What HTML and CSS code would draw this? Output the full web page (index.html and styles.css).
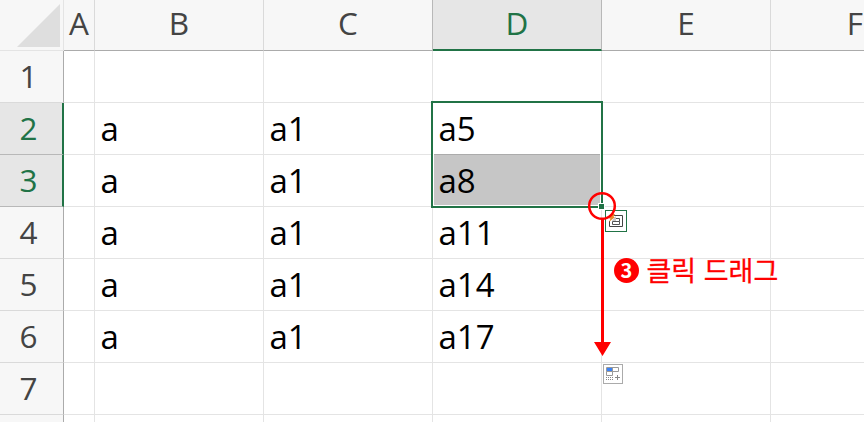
FILE: index.html
```html
<!DOCTYPE html>
<html lang="ko">
<head>
<meta charset="utf-8">
<title>Sheet</title>
<link rel="stylesheet" href="styles.css">
</head>
<body>
<main class="sheet">
  <div class="row head">
    <div class="corner"><svg width="43" height="43" viewBox="0 0 43 43"><path d="M43 0V43H0Z" fill="#dedede"/></svg></div>
    <div class="col">A</div><div class="col">B</div><div class="col before">C</div><div class="col active">D</div><div class="col">E</div><div class="col">F</div>
  </div>
  <div class="row"><div class="num">1</div><div></div><div></div><div></div><div></div><div></div><div></div></div>
  <div class="row"><div class="num active">2</div><div></div><div>a</div><div>a1</div><div class="above">a5</div><div></div><div></div></div>
  <div class="row"><div class="num active">3</div><div></div><div>a</div><div>a1</div><div class="picked">a8</div><div></div><div></div></div>
  <div class="row"><div class="num">4</div><div></div><div>a</div><div>a1</div><div>a11</div><div></div><div></div></div>
  <div class="row"><div class="num">5</div><div></div><div>a</div><div>a1</div><div>a14</div><div></div><div></div></div>
  <div class="row"><div class="num">6</div><div></div><div>a</div><div>a1</div><div>a17</div><div></div><div></div></div>
  <div class="row"><div class="num">7</div><div></div><div></div><div></div><div></div><div></div><div></div></div>
  <div class="row"><div class="num"></div><div></div><div></div><div></div><div></div><div></div><div></div></div>

  <div class="selection"></div>
  <div class="handle"></div>
  <svg class="smart" width="22" height="22" viewBox="0 0 22 22" fill="none">
    <rect x=".5" y=".5" width="21" height="21" fill="#fff" stroke="#217346"/>
    <path d="M9 5.500H17.500V16.500H4.500V11" stroke="#444"/>
    <path d="M10 8.500H14.500V11.500M7.500 11.500H14.500V14.500H7.500Z" stroke="#555"/>
    <path d="M9 8L11 6V11H7Z" fill="#c8c8c8"/>
    <path d="M7 4H10L8.500 7H10L4 12L5.500 8.500H4Z" fill="#e8892b"/>
  </svg>
  <svg class="fill" width="20" height="20" viewBox="0 0 20 20" fill="none">
    <rect x=".5" y=".5" width="19" height="19" fill="#fff" stroke="#ababab"/>
    <path d="M3.500 3.500H15.500V7.500H3.500ZM9.500 3.500V11.500H3.500V7.500" stroke="#999"/>
    <rect x="4" y="4" width="5" height="3" fill="#3b82f6"/>
    <path d="M3 13.500H10M3 15.500H10" stroke="#888" stroke-dasharray="1 1"/>
    <path d="M12 13.500H17M14.500 11V16" stroke="#888"/>
  </svg>
  <svg class="guide" width="30" height="166" viewBox="0 0 30 166">
    <circle cx="15" cy="15" r="12.800" fill="none" stroke="red" stroke-width="2.500"/>
    <path d="M14 27H17V151H24L15.500 165L7 151H14Z" fill="red"/>
  </svg>
  <div class="note"><span class="badge">3</span><span>클릭 드래그</span></div>
</main>
</body>
</html>
```
FILE: styles.css
```css
* { box-sizing: border-box; }
body { margin: 0; background: #fff; overflow: hidden; }
.sheet {
  position: relative;
  width: 864px;
  height: 422px;
  overflow: hidden;
  font: 33px/52px "Open Sans", "Noto Sans CJK KR", sans-serif;
  color: #000;
}
.row {
  display: grid;
  grid-template-columns: 64px 31px repeat(5, 169px);
  grid-template-rows: 100%;
  height: 52px;
}
.row > div {
  border-right: 1px solid #e4e4e4;
  border-bottom: 1px solid #e4e4e4;
  padding-left: 5.5px;
  white-space: nowrap;
}
.row.head { height: 51px; }
.row > .corner {
  background: #f7f7f7;
  padding: 4px 3px 0 0;
  display: flex;
  justify-content: flex-end;
}
.row > .col {
  padding: 0;
  background: #f7f7f7;
  border-bottom-color: #ababab;
  border-right-color: #dadada;
  text-align: center;
  font-size: 31.5px;
  line-height: 46px;
  color: #444;
}
.row > .col.before { border-right-color: #b8b8b8; }
.row > .col.active {
  background: #e6e6e6;
  color: #217346;
  border-right-color: #b8b8b8;
  border-bottom: 2px solid #217346;
}
.row > .num {
  padding: 0 6px 0 0;
  background: #f7f7f7;
  border-right-color: #ababab;
  border-bottom-color: #dadada;
  text-align: center;
  font-size: 31.5px;
  line-height: 50px;
  color: #444;
}
.row > .num.active {
  padding-right: 5px;
  background: #e6e6e6;
  color: #217346;
  border-bottom-color: #b8b8b8;
  border-right: 2px solid #217346;
}
.row > .above { border-bottom-color: #ababab; }
.row > .picked { background: #c6c6c6; }
.selection {
  position: absolute;
  left: 431px;
  top: 101px;
  width: 172px;
  height: 107px;
  border: 2px solid #217346;
  box-shadow: inset 0 0 0 1px #fff;
}
.handle {
  position: absolute;
  left: 598px;
  top: 203px;
  width: 7px;
  height: 7px;
  background: #217346;
  border: 1px solid #fff;
}
.smart { position: absolute; left: 605px; top: 210px; }
.fill { position: absolute; left: 603px; top: 364px; }
.guide { position: absolute; left: 587px; top: 191px; }
.note {
  position: absolute;
  left: 614px;
  top: 250px;
  display: flex;
  align-items: center;
  gap: 7.5px;
  height: 40px;
  color: red;
  font: 400 27px/38px "Noto Sans CJK KR", sans-serif;
  -webkit-text-stroke: 0.3px red;
  white-space: nowrap;
}
.badge {
  width: 25px;
  height: 25px;
  border-radius: 50%;
  background: red;
  color: #fff;
  font: 700 20px/24px "Noto Sans CJK KR", sans-serif;
  -webkit-text-stroke: 0;
  text-align: center;
}
```
